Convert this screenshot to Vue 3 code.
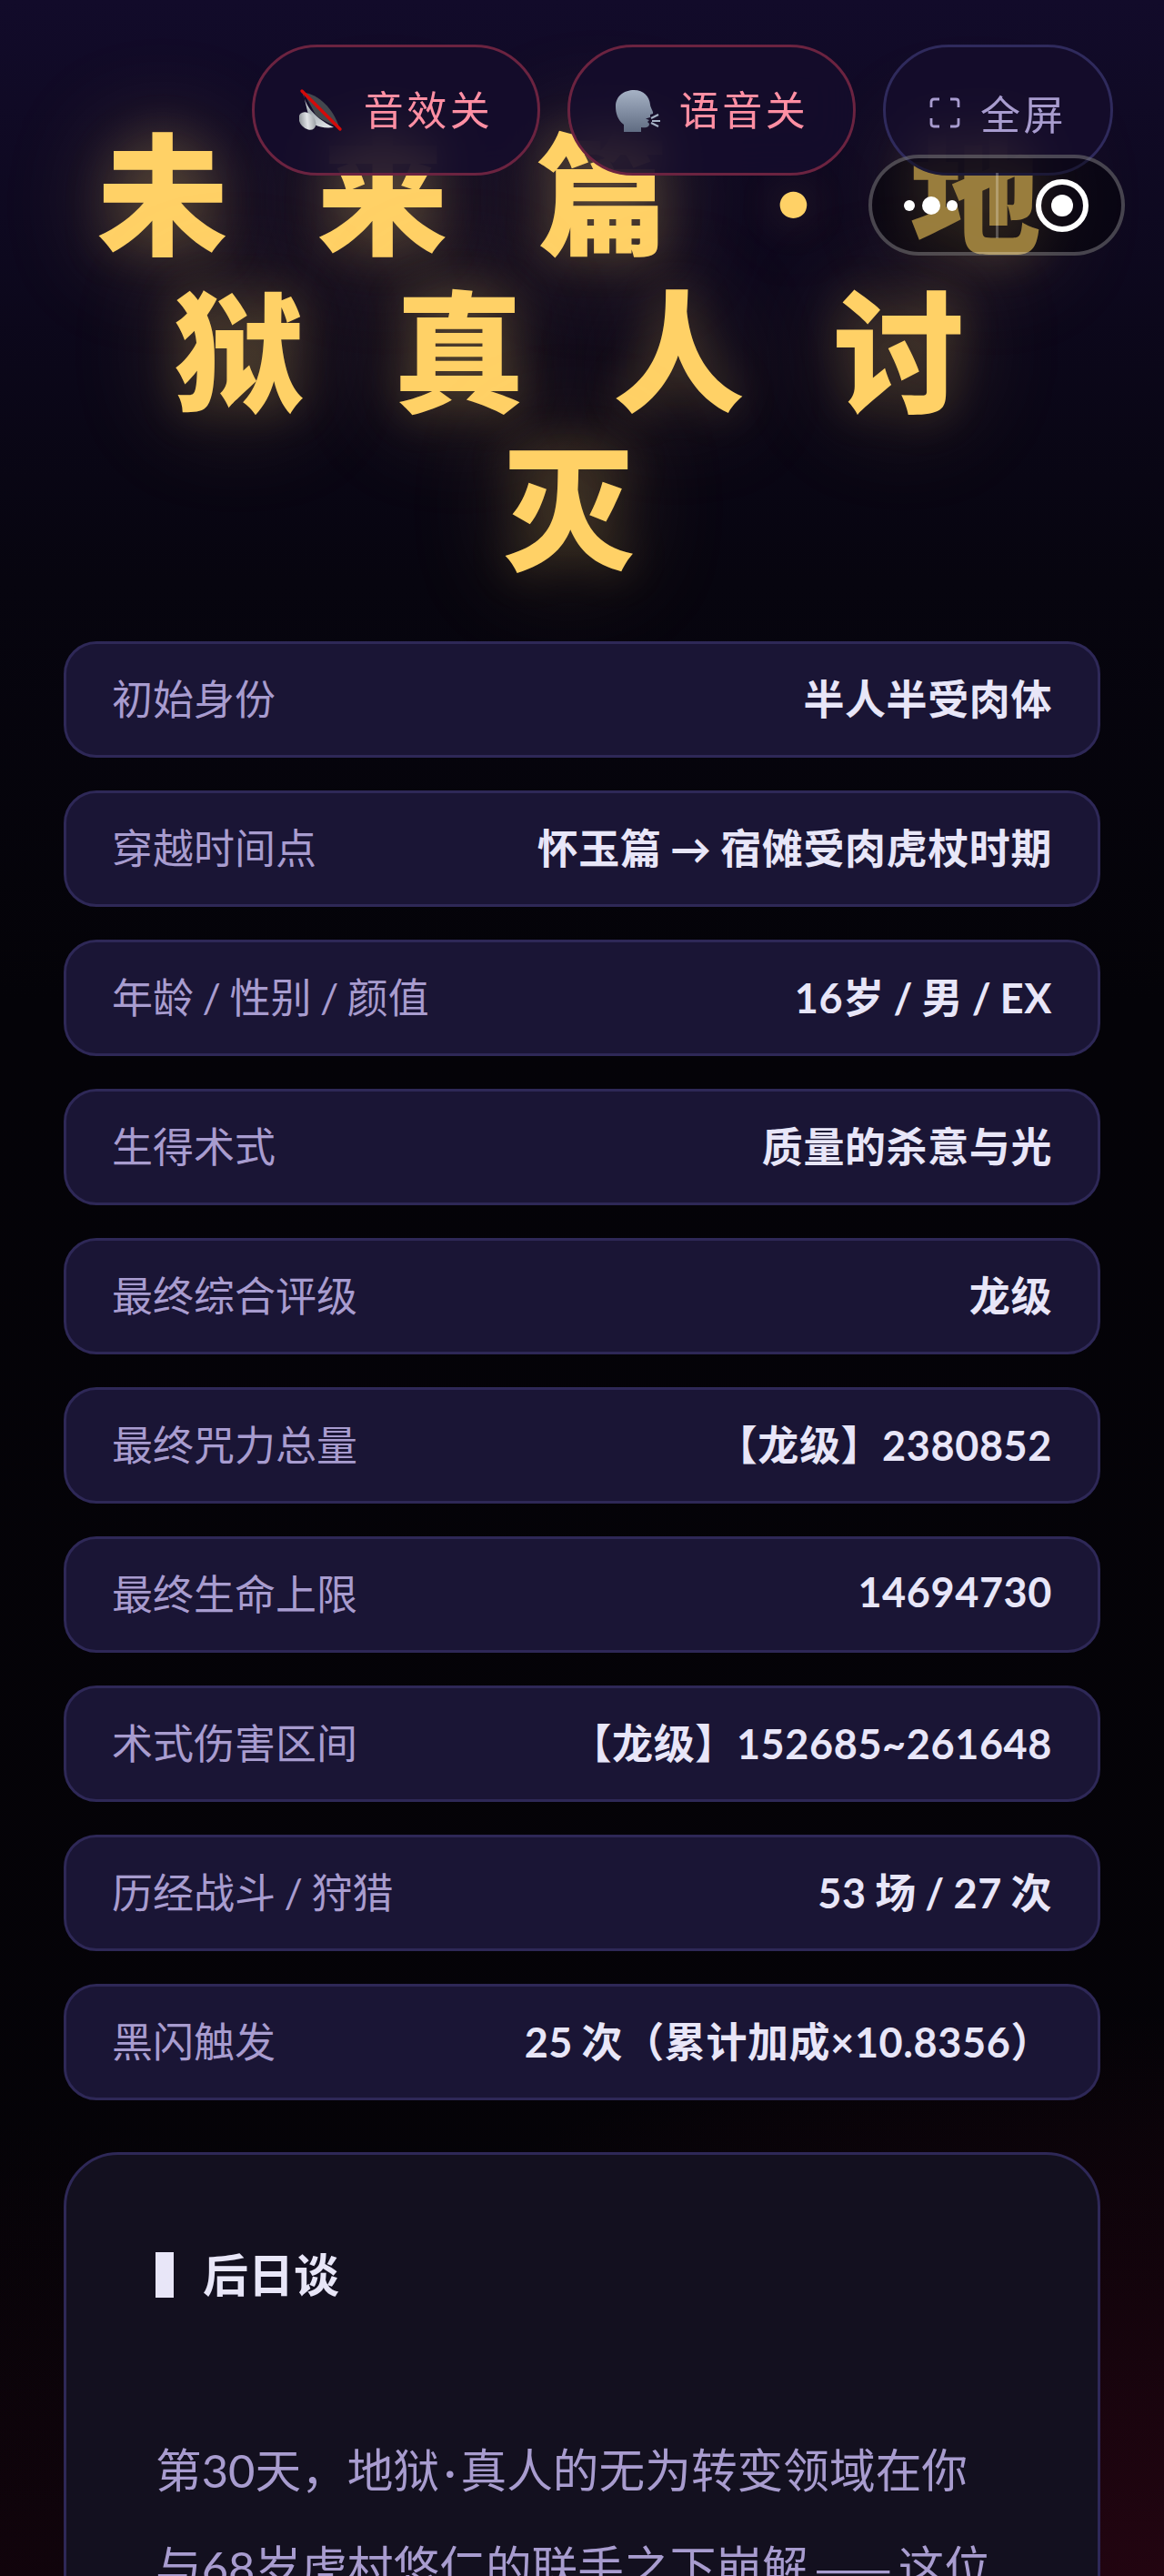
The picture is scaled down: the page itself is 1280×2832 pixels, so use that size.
<script setup>
const stats = [
  { label: '初始身份', value: '半人半受肉体' },
  { label: '穿越时间点', value: '怀玉篇 → 宿傩受肉虎杖时期' },
  { label: '年龄 / 性别 / 颜值', value: '16岁 / 男 / EX' },
  { label: '生得术式', value: '质量的杀意与光' },
  { label: '最终综合评级', value: '龙级' },
  { label: '最终咒力总量', value: '【龙级】2380852' },
  { label: '最终生命上限', value: '14694730' },
  { label: '术式伤害区间', value: '【龙级】152685~261648' },
  { label: '历经战斗 / 狩猎', value: '53 场 / 27 次' },
  { label: '黑闪触发', value: '25 次（累计加成×10.8356）' },
];
</script>

<template>
  <div class="page">
    <div class="controls">
      <button class="ctl off">
        <svg class="emoji" viewBox="12 6 50 50">
          <defs>
            <linearGradient id="cone" x1="0" y1="0" x2="0.7" y2="1">
              <stop offset="0" stop-color="#f0f2f4" />
              <stop offset="0.5" stop-color="#a4abb2" />
              <stop offset="1" stop-color="#dde1e4" />
            </linearGradient>
            <linearGradient id="mag" x1="0" y1="0" x2="1" y2="1">
              <stop offset="0" stop-color="#6b7177" />
              <stop offset="0.5" stop-color="#e2e5e8" />
              <stop offset="1" stop-color="#7d8389" />
            </linearGradient>
            <linearGradient id="head" x1="0" y1="0" x2="0" y2="1">
              <stop offset="0" stop-color="#a6b2c5" />
              <stop offset="1" stop-color="#606c82" />
            </linearGradient>
          </defs>
          <path d="M17 12C33 13 50 30 56 50C46 46 36 42 30 36Z" fill="#44484e" />
          <path d="M16 11C18 24 26 38 50 50C42 51 34 50 29 47L22 36Z" fill="url(#cone)" />
          <ellipse cx="21" cy="43" rx="8" ry="11" transform="rotate(-42 21 43)" fill="url(#mag)" />
          <path d="M15 10L57 52" stroke="#d40a0a" stroke-width="3.4" stroke-linecap="round" />
        </svg>
        <span>音效关</span>
      </button>
      <button class="ctl off">
        <svg class="emoji" viewBox="12 6 50 50">
          <path
            d="M22 55V47C15 42 13 34 13 27C13 15 23 9 33 9C44 9 50 16 51 25C51 28 55 33 54 35L51 36V39L46 40.500L50 42L48 44L50 46C50 50 46 51 41 50V55Z"
            fill="url(#head)"
          />
          <path d="M52 40L60 36M53 43H62M52 45L60 49" stroke="#a6b2c5" stroke-width="2" fill="none" />
        </svg>
        <span>语音关</span>
      </button>
      <button class="ctl full">
        <svg class="frame" viewBox="0 0 34 34">
          <path
            d="M11 2H5Q2 2 2 5V11M23 2H29Q32 2 32 5V11M11 32H5Q2 32 2 29V23M23 32H29Q32 32 32 29V23"
            fill="none"
            stroke="#a89ccf"
            stroke-width="2.800"
          />
        </svg>
        <span class="full-label">全屏</span>
      </button>
    </div>

    <div class="capsule">
      <svg class="dots" viewBox="0 0 60 24">
        <circle cx="6" cy="12" r="6" fill="#fff" />
        <circle cx="30" cy="12" r="10" fill="#fff" />
        <circle cx="53" cy="12" r="6" fill="#fff" />
      </svg>
      <i class="divider"></i>
      <svg class="ring" viewBox="0 0 60 60">
        <circle cx="30" cy="30" r="26" fill="none" stroke="#fff" stroke-width="6" />
        <circle cx="30" cy="30" r="12" fill="#fff" />
      </svg>
    </div>

    <h1 class="title">未 来 篇 <span class="title-dot">·</span> 地 狱 真 人 讨 灭</h1>

    <div class="stats">
      <div v-for="s in stats" :key="s.label" class="row">
        <span class="label">{{ s.label }}</span>
        <span class="value">{{ s.value }}</span>
      </div>
    </div>

    <div class="card">
      <h2 class="card-title">后日谈</h2>
      <p class="story">
        第30天，地狱<span class="story-dot">·</span>真人的无为转变领域在你<br />与68岁虎村悠仁的联手之下崩解<span class="dash">——</span>这位
      </p>
    </div>
  </div>
</template>

<style scoped>
.page {
  position: relative;
  height: 2832px;
  overflow: hidden;
  box-sizing: border-box;
  padding: 127px 70px 0;
  background:
    radial-gradient(ellipse 1100px 620px at 100% 100%, rgba(120, 10, 45, 0.26), transparent 100%),
    radial-gradient(ellipse 900px 500px at 0% 100%, rgba(90, 10, 40, 0.14), transparent 100%),
    linear-gradient(180deg, #120b2a 0px, #07050f 640px, #040308 1100px, #050307 2832px);
  font-family: Lato, 'Noto Sans CJK SC', sans-serif;
}

.controls {
  position: absolute;
  top: 49px;
  right: 56px;
  z-index: 2;
  display: flex;
  gap: 30px;
}

.ctl {
  display: flex;
  align-items: center;
  justify-content: center;
  gap: 21px;
  height: 144px;
  box-sizing: border-box;
  border-radius: 72px;
  background: rgba(21, 13, 43, 0.88);
  backdrop-filter: blur(24px);
  font-family: inherit;
  font-size: 44px;
  letter-spacing: 3.5px;
}

.off {
  width: 317px;
  border: 3px solid #6b2340;
  color: #ff8fa3;
}

.full {
  width: 253px;
  gap: 22px;
  border: 3px solid #2f2a5c;
  color: #a89ccf;
}

.off span {
  margin-bottom: 4px;
}

.full-label {
  margin-top: 6px;
}

.emoji {
  width: 50px;
  height: 50px;
}

.frame {
  width: 34px;
  height: 34px;
  margin-top: 6px;
}

.capsule {
  position: absolute;
  top: 170px;
  left: 955px;
  z-index: 3;
  width: 282px;
  height: 111px;
  box-sizing: border-box;
  border: 4px solid rgba(255, 255, 255, 0.25);
  border-radius: 56px;
  background: rgba(0, 0, 0, 0.4);
}

.dots {
  position: absolute;
  left: 35px;
  top: 40px;
  width: 60px;
  height: 24px;
}

.divider {
  position: absolute;
  left: 136px;
  top: 16px;
  width: 3px;
  height: 72px;
  background: rgba(255, 255, 255, 0.25);
}

.ring {
  position: absolute;
  left: 179px;
  top: 22px;
  width: 60px;
  height: 60px;
}

.title {
  margin: 0 0 59px;
  padding: 0 10px;
  color: #ffd166;
  font-size: 144px;
  font-weight: 900;
  line-height: 173px;
  letter-spacing: 28.800px;
  word-spacing: 6px;
  text-align: center;
  text-shadow:
    0 0 50px rgba(255, 209, 102, 0.22),
    0 0 120px rgba(255, 209, 102, 0.3);
}

.title-dot {
  margin: 0 10px 0 20px;
}

.stats {
  display: flex;
  flex-direction: column;
  gap: 36px;
}

.row {
  display: flex;
  justify-content: space-between;
  align-items: center;
  height: 128px;
  box-sizing: border-box;
  padding: 0 50px 6px;
  border: 3px solid #2e2857;
  border-radius: 36px;
  background: #1a1535;
  font-size: 45px;
}

.label {
  color: #a89ccf;
  word-spacing: -2px;
}

.value {
  color: #e8e6f8;
  font-weight: 700;
  letter-spacing: 0.600px;
  word-spacing: -2px;
}

.card {
  margin-top: 57px;
  padding: 107px 98px 100px;
  border: 3px solid #2e2857;
  border-radius: 60px;
  background: #13101f;
}

.card-title {
  margin: 0;
  padding-left: 32px;
  border-left: 20px solid #e8e6f8;
  color: #e8e6f8;
  font-size: 50px;
  font-weight: 700;
  line-height: 50px;
}

.story {
  margin: 137px 0 0;
  color: #a89ccf;
  font-size: 50.700px;
  line-height: 105px;
}

.story-dot {
  margin: 0 5px;
}

.dash {
  margin: 0 7px;
  font-family: 'Noto Sans CJK SC', sans-serif;
}
</style>
